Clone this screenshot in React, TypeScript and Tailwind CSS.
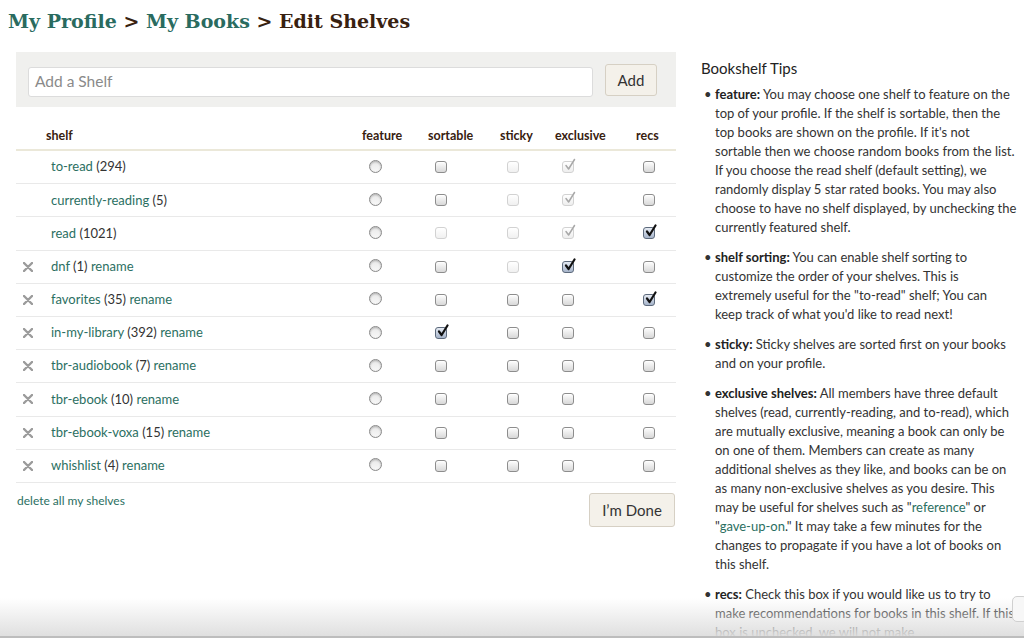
import React from "react";

type Cell = "u" | "d" | "c" | "dc";

const rows: { name: string; count: string; del: boolean; cells: Cell[] }[] = [
  { name: "to-read", count: "(294)", del: false, cells: ["u", "d", "dc", "u"] },
  { name: "currently-reading", count: "(5)", del: false, cells: ["u", "d", "dc", "u"] },
  { name: "read", count: "(1021)", del: false, cells: ["d", "d", "dc", "c"] },
  { name: "dnf", count: "(1)", del: true, cells: ["u", "d", "c", "u"] },
  { name: "favorites", count: "(35)", del: true, cells: ["u", "u", "u", "c"] },
  { name: "in-my-library", count: "(392)", del: true, cells: ["c", "u", "u", "u"] },
  { name: "tbr-audiobook", count: "(7)", del: true, cells: ["u", "u", "u", "u"] },
  { name: "tbr-ebook", count: "(10)", del: true, cells: ["u", "u", "u", "u"] },
  { name: "tbr-ebook-voxa", count: "(15)", del: true, cells: ["u", "u", "u", "u"] },
  { name: "whishlist", count: "(4)", del: true, cells: ["u", "u", "u", "u"] },
];

function Check({ light }: { light?: boolean }) {
  return (
    <svg className="absolute left-[1px] top-[-4px]" width="12" height="14" viewBox="0 0 12 14">
      <path
        d="M2 7.5 L4.6 11 L10.5 1.5"
        fill="none"
        stroke={light ? "#a8a8a8" : "#111"}
        strokeWidth={light ? 1.5 : 2.2}
        strokeLinecap="round"
        strokeLinejoin="round"
      />
    </svg>
  );
}

function Box({ kind }: { kind: Cell }) {
  if (kind === "u")
    return (
      <span className="relative ml-[7px] block h-[12px] w-[12px] rounded-[3px] border border-[#8d8d8d] bg-gradient-to-b from-[#fefefe] to-[#d8d8d8] shadow-[inset_0_1px_0_#fff]" />
    );
  if (kind === "d")
    return (
      <span className="relative ml-[7px] block h-[12px] w-[12px] rounded-[3px] border border-[#d2d2d2] bg-gradient-to-b from-white to-[#f0f0f0]" />
    );
  if (kind === "c")
    return (
      <span className="relative ml-[7px] block h-[12px] w-[12px] rounded-[3px] border border-[#5d6a7c] bg-gradient-to-b from-[#e6ebf3] to-[#a6b4ca]">
        <Check />
      </span>
    );
  return (
    <span className="relative ml-[7px] block h-[12px] w-[12px] rounded-[3px] border border-[#d2d2d2] bg-gradient-to-b from-white to-[#eeeeee]">
      <Check light />
    </span>
  );
}

function Radio() {
  return (
    <span className="ml-[7px] mt-[-2px] block h-[13px] w-[13px] rounded-full border border-[#8a8a8a] bg-gradient-to-b from-[#e8e8e8] to-[#f8f8f8] shadow-[inset_0_1px_2px_rgba(0,0,0,0.25)]" />
  );
}

function XIcon() {
  return (
    <svg width="10" height="10" viewBox="0 0 10 10" className="block">
      <path d="M1 1 L9 9 M9 1 L1 9" stroke="#9b9b9b" strokeWidth="2.4" strokeLinecap="round" />
    </svg>
  );
}

const tips: { label: string; body: React.ReactNode }[] = [
  {
    label: "feature:",
    body: (
      <>
        You may choose one shelf to feature on the top of your profile. If the shelf is sortable, then the top
        books are shown on the profile. If it's not sortable then we choose random books from the list. If you
        choose the read shelf (default setting), we randomly display 5 star rated books. You may also choose to
        have no shelf displayed, by unchecking the currently featured shelf.
      </>
    ),
  },
  {
    label: "shelf sorting:",
    body: (
      <>
        You can enable shelf sorting to customize the order of your shelves. This is extremely useful for the
        "to-read" shelf; You can keep track of what you'd like to read next!
      </>
    ),
  },
  {
    label: "sticky:",
    body: <>Sticky shelves are sorted first on your books and on your profile.</>,
  },
  {
    label: "exclusive shelves:",
    body: (
      <>
        All members have three default shelves (read, currently-reading, and to-read), which are mutually
        exclusive, meaning a book can only be on one of them. Members can create as many additional shelves as
        they like, and books can be on as many non-exclusive shelves as you desire. This may be useful for
        shelves such as "<span className="text-[#2b6f62]">reference</span>" or "
        <span className="text-[#2b6f62]">gave-up-on</span>." It may take a few minutes for the changes to
        propagate if you have a lot of books on this shelf.
      </>
    ),
  },
  {
    label: "recs:",
    body: (
      <>
        Check this box if you would like us to try to make recommendations for books in this shelf. If this box
        is unchecked, we will not make recommendations based on the books in this shelf.
      </>
    ),
  },
];

export default function App() {
  return (
    <div className="relative h-[638px] w-[1024px] overflow-hidden bg-white font-['Lato',sans-serif] text-[#333]">
      <h1 className="h-[52px] pl-[8px] pt-[6px] font-['DejaVu_Serif',serif] text-[19px] font-bold leading-[30px] text-[#382110]">
        <span className="text-[#2a6b5f]">My Profile</span> &gt; <span className="text-[#2a6b5f]">My Books</span>{" "}
        &gt; Edit Shelves
      </h1>

      <div className="flex pl-[16px]">
        {/* left column */}
        <div className="w-[660px]">
          <div className="flex h-[55px] items-start bg-[#f0f0ee] pl-[12px]">
            <div className="mt-[15px] flex h-[30px] w-[565px] items-center rounded-[3px] border border-[#dcdcdc] bg-white pl-[6px] text-[15.5px] text-[#8a8a8a]">
              Add a Shelf
            </div>
            <button className="ml-[12px] mt-[12px] h-[32px] w-[52px] rounded-[3px] border border-[#d6d0c4] bg-[#f4f1ea] text-[15px] text-[#333]">
              Add
            </button>
          </div>

          <div className="mt-[16px] grid h-[28px] grid-cols-[30px_316px_66px_72px_55px_81px_40px] items-center border-b-2 border-[#ebe8d9] text-[12.5px] font-bold text-[#382110]">
            <div />
            <div>shelf</div>
            <div>feature</div>
            <div>sortable</div>
            <div>sticky</div>
            <div>exclusive</div>
            <div>recs</div>
          </div>

          {rows.map((r) => (
            <div
              key={r.name}
              className="grid h-[33.2px] grid-cols-[30px_316px_66px_72px_55px_81px_40px] items-center border-b border-[#e9e9e9] text-[13px]"
            >
              <div className="flex justify-start pl-[7px]">{r.del ? <XIcon /> : null}</div>
              <div className="pl-[5px]">
                <span className="text-[#2b6f62]">{r.name}</span> <span className="text-[#333]">{r.count}</span>
                {r.del ? <span className="text-[#2b6f62]"> rename</span> : null}
              </div>
              <div className="flex items-center">
                <Radio />
              </div>
              {r.cells.map((c, i) => (
                <div key={i} className="flex items-center">
                  <Box kind={c} />
                </div>
              ))}
            </div>
          ))}

          <div className="flex items-start justify-between">
            <div className="mt-[10px] pl-[1px] text-[12px] leading-[16px] text-[#2b6f62]">delete all my shelves</div>
            <button className="mr-[1px] mt-[10px] h-[34px] w-[86px] rounded-[3px] border border-[#d6d0c4] bg-[#f4f1ea] text-[15px] text-[#333]">
              I’m Done
            </button>
          </div>
        </div>

        {/* right column */}
        <div className="ml-[25px] w-[316px] pt-[6px]">
          <div className="text-[15px] leading-[20px] text-[#222]">Bookshelf Tips</div>
          <ul className="mt-[7px]">
            {tips.map((t) => (
              <li key={t.label} className="mb-[11px] flex text-[13px] leading-[19px]">
                <span className="w-[14px] shrink-0 pl-[3px]">•</span>
                <span className="w-[302px]">
                  <b className="font-bold text-[#222]">{t.label}</b> {t.body}
                </span>
              </li>
            ))}
          </ul>
        </div>
      </div>

      {/* browser bottom fade overlay */}
      <div className="pointer-events-none absolute bottom-0 left-0 right-0 h-[40px] bg-gradient-to-b from-white/0 to-[#dedede]" />
      <div className="pointer-events-none absolute bottom-0 left-0 right-0 h-[2px] bg-[#bdbdbd]" />
      <div className="absolute right-[-4px] top-[596px] h-[26px] w-[16px] rounded-[5px] border border-[#d0d0d0] bg-[#f7f7f7]" />
    </div>
  );
}
